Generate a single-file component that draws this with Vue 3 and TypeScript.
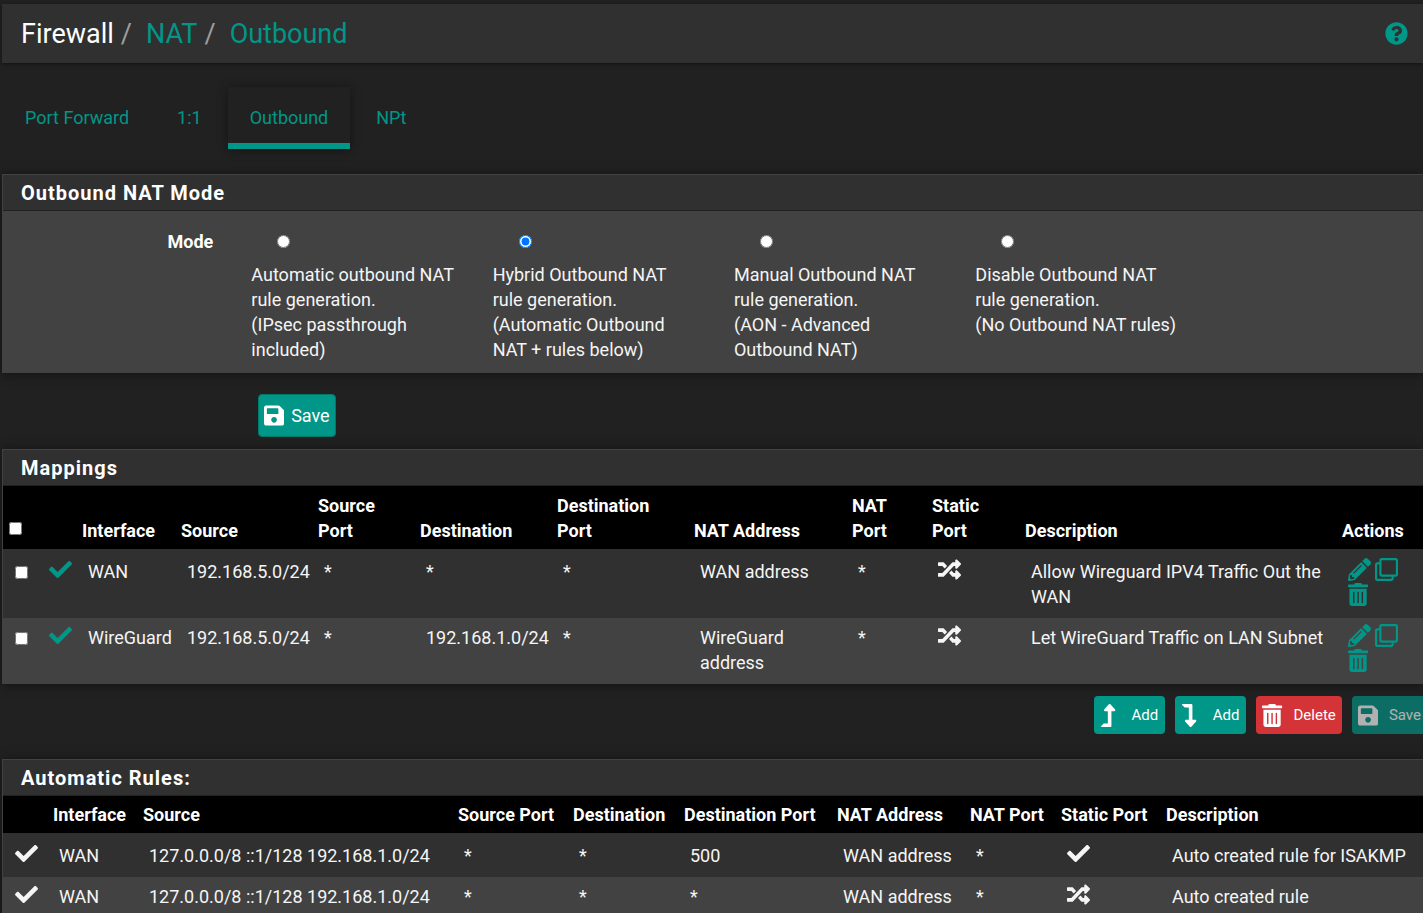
<script setup lang="ts">
import { ref } from 'vue'

interface Icon {
  box: string
  d: string
}

const icons: Record<string, Icon> = {
  check: {
    box: '0 0 512 512',
    d: 'M173.898 439.404l-166.4-166.4c-9.997-9.997-9.997-26.206 0-36.204l36.203-36.204c9.997-9.998 26.207-9.998 36.204 0L192 312.69 432.095 72.596c9.997-9.997 26.207-9.997 36.204 0l36.203 36.204c9.997 9.997 9.997 26.206 0 36.204l-294.4 294.401c-9.998 9.997-26.207 9.997-36.204-.001z',
  },
  shuffle: {
    box: '0 0 512 512',
    d: 'M504.971 359.029c9.373 9.373 9.373 24.569 0 33.941l-80 79.984c-15.01 15.01-40.971 4.49-40.971-16.971V416h-58.785a12.004 12.004 0 0 1-8.773-3.812l-70.556-75.596 53.333-57.143L352 336h32v-39.981c0-21.438 25.943-31.998 40.971-16.971l80 79.981zM12 176h84l52.781 56.551 53.333-57.143-70.556-75.596A11.999 11.999 0 0 0 122.785 96H12c-6.627 0-12 5.373-12 12v56c0 6.627 5.373 12 12 12zm372 0v39.984c0 21.46 25.961 31.98 40.971 16.971l80-79.984c9.373-9.373 9.373-24.569 0-33.941l-80-79.981C409.943 24.021 384 34.582 384 56.019V96h-58.785a12.004 12.004 0 0 0-8.773 3.812L96 336H12c-6.627 0-12 5.373-12 12v56c0 6.627 5.373 12 12 12h110.785c3.326 0 6.503-1.381 8.773-3.812L352 176h32z',
  },
  pencil: {
    box: '0 0 512 512',
    d: 'M497.9 142.1l-46.1 46.1c-4.7 4.7-12.3 4.7-17 0l-111-111c-4.7-4.7-4.7-12.3 0-17l46.1-46.1c18.7-18.7 49.1-18.7 67.9 0l60.1 60.1c18.8 18.7 18.8 49.1 0 67.9zM284.2 99.8L21.6 362.4.4 483.9c-2.9 16.4 11.4 30.6 27.8 27.8l121.5-21.3 262.6-262.6c4.7-4.7 4.7-12.3 0-17l-111-111c-4.8-4.7-12.4-4.7-17.1 0zM124.1 339.9c-5.5-5.5-5.5-14.3 0-19.8l154-154c5.5-5.5 14.3-5.5 19.8 0s5.5 14.3 0 19.8l-154 154c-5.5 5.5-14.3 5.5-19.8 0zM88 424h48v36.3l-64.5 11.3-31.1-31.1L51.7 376H88v48z',
  },
  clone: {
    box: '0 0 512 512',
    d: 'M464 0H144c-26.51 0-48 21.49-48 48v48H48c-26.51 0-48 21.49-48 48v320c0 26.51 21.49 48 48 48h320c26.51 0 48-21.49 48-48v-48h48c26.51 0 48-21.49 48-48V48c0-26.51-21.49-48-48-48zM362 464H54a6 6 0 0 1-6-6V150a6 6 0 0 1 6-6h42v224c0 26.51 21.49 48 48 48h224v42a6 6 0 0 1-6 6zm96-96H150a6 6 0 0 1-6-6V54a6 6 0 0 1 6-6h308a6 6 0 0 1 6 6v308a6 6 0 0 1-6 6z',
  },
  trash: {
    box: '0 0 448 512',
    d: 'M32 464a48 48 0 0 0 48 48h288a48 48 0 0 0 48-48V128H32zm272-256a16 16 0 0 1 32 0v224a16 16 0 0 1-32 0zm-96 0a16 16 0 0 1 32 0v224a16 16 0 0 1-32 0zm-96 0a16 16 0 0 1 32 0v224a16 16 0 0 1-32 0zM432 32H312l-9.4-18.7A24 24 0 0 0 281.1 0H166.8a23.72 23.72 0 0 0-21.4 13.3L136 32H16A16 16 0 0 0 0 48v32a16 16 0 0 0 16 16h416a16 16 0 0 0 16-16V48a16 16 0 0 0-16-16z',
  },
  save: {
    box: '0 0 448 512',
    d: 'M433.941 129.941l-83.882-83.882A48 48 0 0 0 316.118 32H48C21.49 32 0 53.49 0 80v352c0 26.51 21.49 48 48 48h352c26.51 0 48-21.49 48-48V163.882a48 48 0 0 0-14.059-33.941zM224 416c-35.346 0-64-28.654-64-64 0-35.346 28.654-64 64-64s64 28.654 64 64c0 35.346-28.654 64-64 64zm96-304.52V212c0 6.627-5.373 12-12 12H76c-6.627 0-12-5.373-12-12V108c0-6.627 5.373-12 12-12h228.52c3.183 0 6.235 1.264 8.485 3.515l3.48 3.48A11.996 11.996 0 0 1 320 111.48z',
  },
  up: {
    box: '0 0 320 512',
    d: 'M313.553 119.669L209.587 7.666c-9.485-10.214-25.676-10.229-35.174 0L70.438 119.669C56.232 134.969 67.062 160 88.025 160H152v272H68.024a11.996 11.996 0 0 0-8.485 3.515l-56 56C-4.021 499.074 1.333 512 12.024 512H208c13.255 0 24-10.745 24-24V160h63.966c20.878 0 31.851-24.969 17.587-40.331z',
  },
  down: {
    box: '0 0 320 512',
    d: 'M313.553 392.331L209.587 504.334c-9.485 10.214-25.676 10.229-35.174 0L70.438 392.331C56.232 377.031 67.062 352 88.025 352H152V80H68.024a11.996 11.996 0 0 1-8.485-3.515l-56-56C-4.021 12.926 1.333 0 12.024 0H208c13.255 0 24 10.745 24 24v328h63.966c20.878 0 31.851 24.969 17.587 40.331z',
  },
  help: {
    box: '0 0 512 512',
    d: 'M504 256c0 136.997-111.043 248-248 248S8 392.997 8 256C8 119.083 119.043 8 256 8s248 111.083 248 248zM262.655 90c-54.497 0-89.255 22.957-116.549 63.758-3.536 5.286-2.353 12.415 2.715 16.258l34.699 26.31c5.205 3.947 12.621 3.008 16.665-2.122 17.864-22.658 30.113-35.797 57.303-35.797 20.429 0 45.698 13.148 45.698 32.958 0 14.976-12.363 22.667-32.534 33.976C247.128 238.528 216 254.941 216 296v4c0 6.627 5.373 12 12 12h56c6.627 0 12-5.373 12-12v-1.333c0-28.462 83.186-29.647 83.186-106.667 0-58.002-60.165-102-116.531-102zM256 338c-25.365 0-46 20.635-46 46 0 25.364 20.635 46 46 46s46-20.636 46-46c0-25.365-20.635-46-46-46z',
  },
}

const tabs = ['Port Forward', '1:1', 'Outbound', 'NPt']
const activeTab = 'Outbound'

const mode = ref('hybrid')
const modes = [
  { id: 'automatic', title: 'Automatic outbound NAT rule generation.', note: '(IPsec passthrough included)' },
  { id: 'hybrid', title: 'Hybrid Outbound NAT rule generation.', note: '(Automatic Outbound NAT + rules below)' },
  { id: 'manual', title: 'Manual Outbound NAT rule generation.', note: '(AON - Advanced Outbound NAT)' },
  { id: 'disable', title: 'Disable Outbound NAT rule generation.', note: '(No Outbound NAT rules)' },
]

const mappings = [
  {
    iface: 'WAN', source: '192.168.5.0/24', sourcePort: '*', dest: '*', destPort: '*',
    address: 'WAN address', natPort: '*', description: 'Allow Wireguard IPV4 Traffic Out the WAN',
  },
  {
    iface: 'WireGuard', source: '192.168.5.0/24', sourcePort: '*', dest: '192.168.1.0/24', destPort: '*',
    address: 'WireGuard address', natPort: '*', description: 'Let WireGuard Traffic on LAN Subnet',
  },
]
const selected = ref<number[]>([])

const automaticRules = [
  { destPort: '500', staticPort: 'check', description: 'Auto created rule for ISAKMP' },
  { destPort: '*', staticPort: 'shuffle', description: 'Auto created rule' },
]
</script>

<template>
  <div class="page">
    <header class="topbar">
      <h1 class="crumbs">
        <span>Firewall</span><span class="slash">/</span>
        <a href="#nat">NAT</a><span class="slash">/</span>
        <a href="#outbound">Outbound</a>
      </h1>
      <a class="help" href="#help" aria-label="Help">
        <svg class="icon" :viewBox="icons.help.box"><path :d="icons.help.d" /></svg>
      </a>
    </header>

    <nav class="tabs">
      <a v-for="tab in tabs" :key="tab" href="#tab" class="tab" :class="{ active: tab === activeTab }">{{ tab }}</a>
    </nav>

    <form class="mode-form" @submit.prevent>
      <section class="panel">
        <h2 class="panel-title">Outbound NAT Mode</h2>
        <div class="mode-grid" role="radiogroup" aria-labelledby="mode-label">
          <span id="mode-label" class="mode-label">Mode</span>
          <label v-for="m in modes" :key="m.id" class="mode-option">
            <input v-model="mode" type="radio" name="mode" :value="m.id">
            <span>{{ m.title }}<br>{{ m.note }}</span>
          </label>
        </div>
      </section>
      <button type="submit" class="btn btn-main">
        <svg class="icon" :viewBox="icons.save.box"><path :d="icons.save.d" /></svg>Save
      </button>
    </form>

    <section class="panel">
      <h2 class="panel-title">Mappings</h2>
      <table class="mappings">
        <colgroup>
          <col class="c-select"><col class="c-state"><col class="c-iface"><col class="c-wide"><col class="c-sport">
          <col class="c-wide"><col class="c-wide"><col class="c-address"><col class="c-nport"><col class="c-static">
          <col><col class="c-actions">
        </colgroup>
        <thead>
          <tr>
            <th><input type="checkbox" aria-label="Select all"></th>
            <th></th>
            <th>Interface</th>
            <th>Source</th>
            <th>Source Port</th>
            <th>Destination</th>
            <th>Destination Port</th>
            <th>NAT Address</th>
            <th>NAT Port</th>
            <th>Static Port</th>
            <th>Description</th>
            <th>Actions</th>
          </tr>
        </thead>
        <tbody>
          <tr v-for="(row, i) in mappings" :key="i">
            <td><input v-model="selected" type="checkbox" :value="i" :aria-label="`Select ${row.description}`"></td>
            <td>
              <a href="#toggle" aria-label="Toggle rule">
                <svg class="icon" :viewBox="icons.check.box"><path :d="icons.check.d" /></svg>
              </a>
            </td>
            <td>{{ row.iface }}</td>
            <td>{{ row.source }}</td>
            <td>{{ row.sourcePort }}</td>
            <td>{{ row.dest }}</td>
            <td>{{ row.destPort }}</td>
            <td>{{ row.address }}</td>
            <td>{{ row.natPort }}</td>
            <td><svg class="icon" :viewBox="icons.shuffle.box"><path :d="icons.shuffle.d" /></svg></td>
            <td>{{ row.description }}</td>
            <td>
              <div class="actions">
                <a href="#edit" aria-label="Edit"><svg class="icon" :viewBox="icons.pencil.box"><path :d="icons.pencil.d" /></svg></a>
                <a href="#copy" aria-label="Copy"><svg class="icon" :viewBox="icons.clone.box"><path :d="icons.clone.d" /></svg></a>
                <a href="#delete" aria-label="Delete"><svg class="icon" :viewBox="icons.trash.box"><path :d="icons.trash.d" /></svg></a>
              </div>
            </td>
          </tr>
        </tbody>
      </table>
    </section>

    <div class="toolbar">
      <button type="button" class="btn btn-small add"><svg class="icon" :viewBox="icons.up.box"><path :d="icons.up.d" /></svg>Add</button>
      <button type="button" class="btn btn-small add"><svg class="icon" :viewBox="icons.down.box"><path :d="icons.down.d" /></svg>Add</button>
      <button type="button" class="btn btn-small danger"><svg class="icon" :viewBox="icons.trash.box"><path :d="icons.trash.d" /></svg>Delete</button>
      <button type="button" class="btn btn-small" disabled><svg class="icon" :viewBox="icons.save.box"><path :d="icons.save.d" /></svg>Save</button>
    </div>

    <section class="panel">
      <h2 class="panel-title">Automatic Rules:</h2>
      <table class="automatic">
        <colgroup>
          <col class="a-state"><col class="a-iface"><col class="a-source"><col class="a-sport"><col class="a-dest">
          <col class="a-dport"><col class="a-address"><col class="a-nport"><col class="a-static"><col>
        </colgroup>
        <thead>
          <tr>
            <th></th>
            <th>Interface</th>
            <th>Source</th>
            <th>Source Port</th>
            <th>Destination</th>
            <th>Destination Port</th>
            <th>NAT Address</th>
            <th>NAT Port</th>
            <th>Static Port</th>
            <th>Description</th>
          </tr>
        </thead>
        <tbody>
          <tr v-for="rule in automaticRules" :key="rule.description">
            <td><svg class="icon" :viewBox="icons.check.box"><path :d="icons.check.d" /></svg></td>
            <td>WAN</td>
            <td>127.0.0.0/8 ::1/128 192.168.1.0/24</td>
            <td>*</td>
            <td>*</td>
            <td>{{ rule.destPort }}</td>
            <td>WAN address</td>
            <td>*</td>
            <td><svg class="icon" :viewBox="icons[rule.staticPort].box"><path :d="icons[rule.staticPort].d" /></svg></td>
            <td>{{ rule.description }}</td>
          </tr>
        </tbody>
      </table>
    </section>
  </div>
</template>

<style>
body {
  margin: 0;
  background: #212121;
}
</style>

<style scoped>
.page {
  height: 100vh;
  box-sizing: border-box;
  padding: 4px 0 0 2px;
  overflow: hidden;
  background: #212121;
  color: #f5f5f5;
  font: 400 18px/25px Roboto, "Liberation Sans", sans-serif;
}

a {
  color: #009688;
  text-decoration: none;
}

.icon {
  display: block;
  height: 23px;
  fill: currentColor;
}

input {
  display: block;
  width: 13px;
  height: 13px;
  margin: 0;
}

.topbar {
  display: flex;
  align-items: center;
  justify-content: space-between;
  height: 59px;
  padding: 0 15px 0 19px;
  background: #303030;
  box-shadow: 0 1px 4px rgba(0, 0, 0, 0.5);
}

.crumbs {
  display: flex;
  margin: 0;
  color: #fff;
  font-size: 27px;
  font-weight: 400;
  line-height: 32px;
}

.slash {
  margin: 0 14px 0 7px;
  color: #9e9e9e;
}

.tabs {
  display: flex;
  gap: 4px;
  margin: 24px 0 25px 1px;
}

.tab {
  padding: 18px 22px 19px;
}

.tab.active {
  padding-bottom: 13px;
  border-bottom: 6px solid #009688;
  box-shadow: 0 1px 10px rgba(0, 0, 0, 0.4);
}

.panel {
  border: 1px solid #424242;
  border-width: 1px 0 0 1px;
  background: #303030;
  box-shadow: 0 1px 10px rgba(0, 0, 0, 0.5);
}

.panel-title {
  margin: 0;
  padding: 6px 18px 4px;
  border-bottom: 1px solid #212121;
  color: #fff;
  font-size: 20px;
  font-weight: 700;
  line-height: 25px;
  letter-spacing: 1px;
}

.mode-form {
  margin-bottom: 12px;
}

.mode-grid {
  display: grid;
  grid-template-columns: repeat(6, 1fr);
  margin-right: -28px;
  padding: 18px 0 11px;
  background: #424242;
}

.mode-label {
  padding-right: 31px;
  color: #fff;
  font-weight: 700;
  text-align: right;
}

.mode-option {
  padding: 0 28px 0 7px;
}

.mode-option input {
  margin: 6px 0 14px 26px;
}

.btn {
  display: flex;
  align-items: center;
  border: 0;
  border-radius: 4px;
  background: #009688;
  color: #fff;
  font: inherit;
}

.btn-main {
  gap: 7px;
  height: 43px;
  margin: 21px 0 0 256px;
  padding: 0 5px;
  border: 1px solid #00796b;
}

.btn-small {
  gap: 11px;
  height: 38px;
  padding: 0 6px;
  font-size: 15px;
}

.add {
  gap: 16px;
  padding: 0 7px;
}

.danger {
  background: #d43338;
}

.btn:disabled {
  opacity: 0.65;
}

table {
  width: 100%;
  table-layout: fixed;
  border-collapse: separate;
  border-spacing: 0;
}

thead {
  background: #000;
}

th {
  padding: 6px;
  color: #fff;
  font-weight: 700;
  text-align: left;
  vertical-align: bottom;
}

.mappings th {
  padding-top: 7px;
}

th input {
  margin-bottom: 8px;
}

td {
  padding: 7px 0 9px 12px;
  vertical-align: top;
}

td input {
  margin-top: 7px;
}

td .icon {
  margin-top: -1px;
}

tbody tr:first-child td {
  border-top: 3px solid #303030;
}

tbody tr:nth-child(even) {
  background: #424242;
}

.c-select { width: 34px; }
.c-state { width: 39px; }
.c-iface { width: 99px; }
.c-wide { width: 137px; }
.c-sport { width: 102px; }
.c-address { width: 158px; }
.c-nport { width: 80px; }
.c-static { width: 93px; }
.c-actions { width: 87px; }

.actions {
  display: flex;
  flex-wrap: wrap;
  gap: 3px 4px;
  max-width: 56px;
}

.toolbar {
  display: flex;
  justify-content: flex-end;
  gap: 10px;
  margin: 12px -4px 25px 0;
}

.a-state { width: 44px; }
.a-iface { width: 90px; }
.a-source { width: 315px; }
.a-sport { width: 115px; }
.a-dest { width: 111px; }
.a-dport { width: 153px; }
.a-address { width: 133px; }
.a-nport { width: 91px; }
.a-static { width: 105px; }
</style>
